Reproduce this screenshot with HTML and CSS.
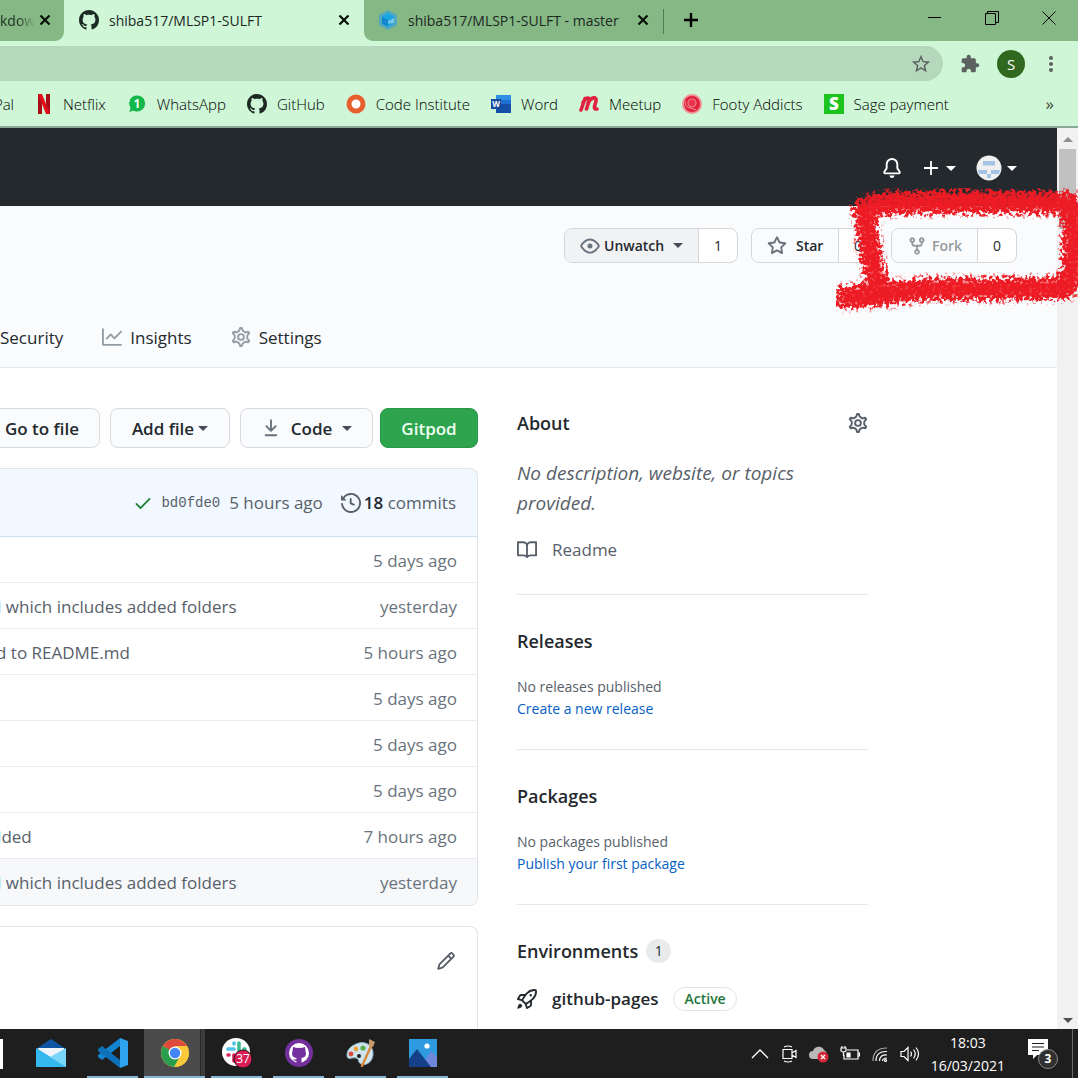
FILE: index.html
```html
<!DOCTYPE html>
<html lang="en">
<head>
<meta charset="utf-8">
<title>shiba517/MLSP1-SULFT</title>
<link rel="stylesheet" href="styles.css">
</head>
<body>
<svg class="defs" aria-hidden="true">
  <symbol id="i-github" viewBox="0 0 16 16"><path d="M8 0C3.58 0 0 3.58 0 8c0 3.54 2.29 6.53 5.47 7.59.4.07.55-.17.55-.38 0-.19-.01-.82-.01-1.49-2.01.37-2.53-.49-2.69-.94-.09-.23-.48-.94-.82-1.13-.28-.15-.68-.52-.01-.53.63-.01 1.08.58 1.23.82.72 1.21 1.87.87 2.33.66.07-.52.28-.87.51-1.07-1.78-.2-3.64-.89-3.64-3.95 0-.87.31-1.59.82-2.15-.08-.2-.36-1.02.08-2.12 0 0 .67-.21 2.2.82.64-.18 1.32-.27 2-.27.68 0 1.36.09 2 .27 1.53-1.04 2.2-.82 2.2-.82.44 1.1.16 1.92.08 2.12.51.56.82 1.27.82 2.15 0 3.07-1.87 3.75-3.65 3.95.29.25.54.73.54 1.48 0 1.07-.01 1.93-.01 2.2 0 .21.15.46.55.38A8.013 8.013 0 0016 8c0-4.42-3.58-8-8-8z"/></symbol>
  <symbol id="i-gear" viewBox="0.75 0.75 14.5 14.5"><g fill="none" stroke="currentColor" stroke-width="1.4"><circle cx="8" cy="8" r="2.1"/><path d="M7.429 1.525a6.593 6.593 0 011.142 0c.036.003.108.036.137.146l.289 1.105c.147.56.55.967.997 1.189.174.086.341.183.501.29.417.278.97.423 1.53.27l1.102-.303c.11-.03.175.016.195.046.219.31.41.641.573.989.014.031.022.11-.059.19l-.815.806c-.411.406-.562.957-.53 1.456a4.588 4.588 0 010 .582c-.032.499.119 1.05.53 1.456l.815.806c.08.08.073.159.059.19a6.494 6.494 0 01-.573.99c-.02.029-.086.074-.195.045l-1.103-.303c-.559-.153-1.112-.008-1.529.27-.16.107-.327.204-.5.29-.449.222-.851.628-.998 1.189l-.289 1.105c-.029.11-.101.143-.137.146a6.613 6.613 0 01-1.142 0c-.036-.003-.108-.037-.137-.146l-.289-1.105c-.147-.56-.55-.967-.997-1.189a4.502 4.502 0 01-.501-.29c-.417-.278-.97-.423-1.53-.27l-1.102.303c-.11.03-.175-.016-.195-.046a6.492 6.492 0 01-.573-.989c-.014-.031-.022-.11.059-.19l.815-.806c.411-.406.562-.957.53-1.456a4.587 4.587 0 010-.582c.032-.499-.119-1.05-.53-1.456l-.815-.806c-.08-.08-.073-.159-.059-.19a6.44 6.44 0 01.573-.99c.02-.029.086-.075.195-.045l1.103.303c.559.153 1.112.008 1.529-.27.16-.107.327-.204.5-.29.449-.222.851-.628.998-1.189l.289-1.105c.029-.11.101-.143.137-.146z"/></g></symbol>
  <symbol id="i-close" viewBox="0 0 12 12"><path d="M1.5 1.5l9 9M10.5 1.5l-9 9" stroke="currentColor" stroke-width="2.2" fill="none"/></symbol>
</svg>

<header class="browser">
  <div class="tabs">
    <div class="tab tab-first"><span class="tab-fade">kdow</span><button class="icon-btn tab-close" aria-label="Close tab"><svg width="12" height="12"><use href="#i-close"/></svg></button></div>
    <div class="tab tab-active"><svg class="tab-icon" width="20" height="20"><use href="#i-github"/></svg><span class="tab-title">shiba517/MLSP1-SULFT</span><button class="icon-btn tab-close" aria-label="Close tab"><svg width="12" height="12"><use href="#i-close"/></svg></button></div>
    <div class="tab tab-last">
      <svg class="tab-icon" width="20" height="20" viewBox="0 0 20 20"><path d="M10 0l9 5v10l-9 5-9-5V5z" fill="#51a9c0"/><path d="M10 3l6 3.500v7L10 17l-6-3.500v-7z" fill="#1aa6e4"/><path d="M4 6.500l6 3.500v7l-6-3.500z" fill="#1287cc"/><path d="M16 8l-6 3.500v2.500l3-1.500v1.500l3-1.500z" fill="#7cc6e6"/></svg>
      <span class="tab-title">shiba517/MLSP1-SULFT - master</span><button class="icon-btn tab-close" aria-label="Close tab"><svg width="12" height="12"><use href="#i-close"/></svg></button></div>
    <button class="icon-btn new-tab" aria-label="New tab"><svg width="16" height="16" viewBox="0 0 16 16"><path d="M8 1v14M1 8h14" stroke="currentColor" stroke-width="2.400"/></svg></button>
    <div class="window-controls">
      <button class="icon-btn" aria-label="Minimize"><svg width="14" height="14" viewBox="0 0 14 14"><path d="M0 6.500h13" stroke="currentColor"/></svg></button>
      <button class="icon-btn" aria-label="Restore"><svg width="14" height="14" viewBox="0 0 14 14" fill="none" stroke="currentColor"><path d="M.5 2.500h10v11H.5z"/><path d="M2.500 2.500v-2h11v11h-3"/></svg></button>
      <button class="icon-btn" aria-label="Close"><svg width="14" height="14" viewBox="0 0 14 14"><path d="M.5.5l13 13M13.500.5l-13 13" stroke="currentColor"/></svg></button>
    </div>
  </div>
  <div class="toolbar">
    <div class="omnibox"><input type="text" aria-label="Address"><button class="icon-btn" aria-label="Bookmark this page"><svg width="22" height="22" viewBox="0 0 24 24"><path fill="currentColor" d="M22 9.240l-7.190-.62L12 2 9.190 8.630 2 9.240l5.460 4.730L5.820 21 12 17.270 18.180 21l-1.630-7.030L22 9.240zM12 15.400l-3.760 2.270 1-4.280-3.320-2.880 4.380-.38L12 6.100l1.710 4.040 4.380.38-3.320 2.880 1 4.280L12 15.400z"/></svg></button></div>
    <button class="icon-btn extensions" aria-label="Extensions"><svg width="20" height="20" viewBox="0 0 24 24"><path fill="currentColor" d="M20.500 11H19V7c0-1.100-.9-2-2-2h-4V3.500C13 2.120 11.880 1 10.500 1S8 2.120 8 3.500V5H4c-1.100 0-1.990.9-1.990 2v3.800H3.500c1.490 0 2.700 1.210 2.700 2.700s-1.210 2.700-2.700 2.700H2V20c0 1.100.9 2 2 2h3.800v-1.500c0-1.490 1.210-2.700 2.700-2.700 1.490 0 2.700 1.210 2.700 2.700V22H17c1.100 0 2-.9 2-2v-4h1.500c1.380 0 2.500-1.120 2.500-2.500S21.880 11 20.500 11z"/></svg></button>
    <button class="profile">S</button>
    <button class="icon-btn" aria-label="Menu"><svg width="6" height="18" viewBox="0 0 6 18"><circle cx="3" cy="3" r="2"/><circle cx="3" cy="9" r="2"/><circle cx="3" cy="15" r="2"/></svg></button>
  </div>
  <nav class="bookmarks">
    <a class="bm-first" href="#">Pal</a>
    <a href="#"><svg width="18" height="20" viewBox="-1 0 18 20"><path d="M2 0h4v20H2zM10 0h4v20h-4z" fill="#a90d16"/><path d="M2 0h4l8 20h-4z" fill="#e3101b"/></svg><span>Netflix</span></a>
    <a href="#"><svg width="20" height="20" viewBox="-1 0 20 20"><path d="M9 1a8.500 8.500 0 11-4 16L.5 19 2 14A8.500 8.500 0 019 1z" fill="#12b84a" stroke="#e6fbea" stroke-width=".8"/><text x="9" y="14" text-anchor="middle" font-size="12" font-weight="700" fill="#eaffef">1</text></svg><span>WhatsApp</span></a>
    <a href="#"><svg width="20" height="20"><use href="#i-github"/></svg><span>GitHub</span></a>
    <a href="#"><svg width="20" height="20" viewBox="0 0 20 20"><circle cx="10" cy="10" r="7" fill="#fff" stroke="#e9602f" stroke-width="5"/></svg><span>Code Institute</span></a>
    <a href="#"><svg width="20" height="20" viewBox="0 0 20 20"><path fill="#2f8fe4" d="M5 1h15v5H5z"/><path fill="#1f6fd0" d="M5 6h15v4H5z"/><path fill="#164fa8" d="M5 10h15v9H5z"/><path fill="#174a9f" d="M0 5h10v10H0z"/><text x="5" y="13" text-anchor="middle" font-size="8" font-weight="700" fill="#fff">W</text></svg><span>Word</span></a>
    <a href="#"><svg width="20" height="20" viewBox="0 0 20 20"><path d="M2 16L6 4.500M4 9c2-5 7-7 6-2L7.500 15M9 9c3-6 9-7 8-2l-1.500 5.500q-.5 3 2.500 2.500" fill="none" stroke="#e0213f" stroke-width="3.600" stroke-linecap="round" stroke-linejoin="round"/></svg><span>Meetup</span></a>
    <a href="#"><svg width="20" height="20" viewBox="0 0 20 20"><circle cx="10" cy="10" r="9" fill="#e0213c" stroke="#f08f96" stroke-width="2"/><circle cx="10" cy="9" r="4" fill="#e8354b" stroke="#f2808c" stroke-width="1.200"/><path d="M3 7q0 7 6 7l5 2" fill="none" stroke="#f08f96"/></svg><span>Footy Addicts</span></a>
    <a href="#"><svg width="20" height="20" viewBox="0 0 20 20"><path fill="#1ec41e" d="M0 0h20v20H0z"/><text x="10" y="16" text-anchor="middle" font-size="17" font-weight="800" fill="#fff">S</text></svg><span>Sage payment</span></a>
    <button class="icon-btn more" aria-label="More bookmarks">»</button>
  </nav>
</header>

<div class="viewport">
  <div class="page">
    <div class="gh-header">
      <button class="icon-btn bell" aria-label="Notifications"><svg width="20" height="20" viewBox="0 0 16 16"><path d="M8 16a2 2 0 001.985-1.750c.017-.137-.097-.25-.235-.25h-3.500c-.138 0-.252.113-.235.25A2 2 0 008 16z"/><path fill-rule="evenodd" d="M8 1.500A3.500 3.500 0 004.500 5v2.947c0 .346-.102.683-.294.97l-1.703 2.556L2.518 11.500h10.964l.015-.027-1.703-2.556a1.750 1.750 0 01-.294-.97V5A3.500 3.500 0 008 1.500zM3 5a5 5 0 0110 0v2.947c0 .05.015.098.042.139l1.703 2.555A1.518 1.518 0 0113.482 13H2.518a1.518 1.518 0 01-1.263-2.360l1.703-2.554A.25.25 0 003 7.947V5z"/></svg></button>
      <button class="icon-btn create" aria-label="Create new"><svg width="14" height="14" viewBox="0 0 14 14"><path d="M7 0v14M0 7h14" stroke="currentColor" stroke-width="1.800"/></svg><span class="caret"></span></button>
      <button class="icon-btn account" aria-label="Account"><svg width="26" height="26" viewBox="0 0 26 26"><circle cx="13" cy="13" r="12.500" fill="#f0f0f0"/><path fill="#a5c3e6" d="M7 6h12v4.500H7zM2 15h9v4H3zM15 15h9l-1 4h-8zM11 19h4v4h-4z"/></svg><span class="caret"></span></button>
    </div>
    <div class="repo-head">
      <div class="repo-actions">
        <div class="split"><button class="split-main watching"><svg width="20" height="20" viewBox="0 0 16 16"><path fill="currentColor" fill-rule="evenodd" d="M1.679 7.932c.412-.621 1.242-1.750 2.366-2.717C5.175 4.242 6.527 3.500 8 3.500c1.473 0 2.824.742 3.955 1.715 1.124.967 1.954 2.096 2.366 2.717a.119.119 0 010 .136c-.412.621-1.242 1.750-2.366 2.717C10.825 11.758 9.473 12.500 8 12.500c-1.473 0-2.824-.742-3.955-1.715C2.920 9.818 2.090 8.690 1.679 8.068a.119.119 0 010-.136zM8 2c-1.981 0-3.670.992-4.933 2.078C1.797 5.169.88 6.423.43 7.100a1.619 1.619 0 000 1.798c.45.678 1.367 1.932 2.637 3.024C4.329 13.008 6.019 14 8 14c1.981 0 3.670-.992 4.933-2.078 1.270-1.091 2.187-2.345 2.637-3.023a1.619 1.619 0 000-1.798c-.45-.678-1.367-1.932-2.637-3.023C11.671 2.992 9.981 2 8 2zm0 8a2 2 0 100-4 2 2 0 000 4z"/></svg>Unwatch<span class="caret"></span></button><a class="count" href="#">1</a></div>
        <div class="split"><button class="split-main star"><svg width="20" height="20" viewBox="0 0 16 16"><path fill="currentColor" fill-rule="evenodd" d="M8 .25a.75.75 0 01.673.418l1.882 3.815 4.210.612a.75.75 0 01.416 1.279l-3.046 2.970.719 4.192a.75.75 0 01-1.088.791L8 12.347l-3.766 1.980a.75.75 0 01-1.088-.79l.72-4.194L.818 6.374a.75.75 0 01.416-1.280l4.210-.611L7.327.668A.75.75 0 018 .25zm0 2.445L6.615 5.500a.75.75 0 01-.564.41l-3.097.45 2.240 2.184a.75.75 0 01.216.664l-.528 3.084 2.769-1.456a.75.75 0 01.698 0l2.770 1.456-.53-3.084a.75.75 0 01.216-.664l2.240-2.183-3.096-.45a.75.75 0 01-.564-.41L8 2.694v.001z"/></svg>Star</button><a class="count" href="#">0</a></div>
        <div class="split"><button class="split-main fork" disabled><svg width="20" height="20" viewBox="0 0 16 16"><path fill="currentColor" fill-rule="evenodd" d="M5 3.250a.75.75 0 11-1.500 0 .75.75 0 011.500 0zm0 2.122a2.250 2.250 0 10-1.500 0v.878A2.250 2.250 0 005.750 8.500h1.500v2.128a2.251 2.251 0 101.500 0V8.500h1.500a2.250 2.250 0 002.250-2.250v-.878a2.250 2.250 0 10-1.500 0v.878a.75.75 0 01-.75.75h-4.500A.75.75 0 015 6.250v-.878zm3.750 7.378a.75.75 0 11-1.500 0 .75.75 0 011.500 0zm3-8.750a.75.75 0 100-1.500.75.75 0 000 1.500z"/></svg>Fork</button><a class="count" href="#">0</a></div>
      </div>
      <nav class="repo-nav">
        <a href="#">Security</a>
        <a href="#"><svg width="20" height="20" viewBox="0 0 16 16"><path fill="currentColor" d="M1.500 1.750a.75.75 0 00-1.500 0v12.500c0 .414.336.75.75.75h14.500a.75.75 0 000-1.500H1.500V1.750zm14.280 2.530a.75.75 0 00-1.060-1.060L10 7.940 7.530 5.470a.75.75 0 00-1.060 0L3.220 8.720a.75.75 0 001.060 1.060L7 7.060l2.470 2.470a.75.75 0 001.060 0l5.250-5.250z"/></svg>Insights</a>
        <a href="#"><svg width="20" height="20"><use href="#i-gear"/></svg>Settings</a>
      </nav>
    </div>
    <div class="repo-body">
      <main class="files">
        <div class="file-actions">
          <button class="btn goto">Go to file</button>
          <button class="btn add">Add file<span class="caret"></span></button>
          <button class="btn code"><svg width="20" height="20" viewBox="0 0 16 16"><path fill="currentColor" d="M7.470 10.780a.75.75 0 001.060 0l3.750-3.750a.75.75 0 00-1.060-1.060L8.750 8.440V1.750a.75.75 0 00-1.500 0v6.690L4.780 5.970a.75.75 0 00-1.060 1.060l3.750 3.750zM3.750 13a.75.75 0 000 1.500h8.500a.75.75 0 000-1.500h-8.500z"/></svg>Code<span class="caret"></span></button>
          <button class="btn gitpod">Gitpod</button>
        </div>
        <div class="box">
          <div class="commit-bar">
            <svg class="check" width="20" height="20" viewBox="0 0 16 16"><path fill="currentColor" d="M13.780 4.220a.75.75 0 010 1.060l-7.250 7.250a.75.75 0 01-1.060 0L2.220 9.280a.75.75 0 011.060-1.060L6 10.940l6.720-6.720a.75.75 0 011.060 0z"/></svg>
            <a class="sha" href="#">bd0fde0</a>
            <a class="when" href="#">5 hours ago</a>
            <a class="commits" href="#"><svg width="20" height="20" viewBox="0 0 16 16"><path fill="currentColor" d="M1.643 3.143L.427 1.927A.25.25 0 000 2.104V5.750c0 .138.112.25.25.25h3.646a.25.25 0 00.177-.427L2.715 4.215a6.500 6.500 0 11-1.180 4.458.75.75 0 10-1.493.154 8.001 8.001 0 101.600-5.684zM7.750 4a.75.75 0 01.75.75v2.992l2.028.812a.75.75 0 01-.557 1.392l-2.500-1A.75.75 0 017 8.250v-3.500A.75.75 0 017.750 4z"/></svg><span><strong>18</strong> commits</span></a>
          </div>
          <table class="file-table">
            <tr><td></td><td>5 days ago</td></tr>
            <tr><td><span class="cut">d which includes added folders</span></td><td>yesterday</td></tr>
            <tr><td><span class="cut-less">d to README.md</span></td><td>5 hours ago</td></tr>
            <tr><td></td><td>5 days ago</td></tr>
            <tr><td></td><td>5 days ago</td></tr>
            <tr><td></td><td>5 days ago</td></tr>
            <tr><td><span class="cut">dded</span></td><td>7 hours ago</td></tr>
            <tr class="hovered"><td><span class="cut">d which includes added folders</span></td><td>yesterday</td></tr>
          </table>
        </div>
        <div class="box readme"><button class="icon-btn" aria-label="Edit this file"><svg width="20" height="20" viewBox="0 0 16 16"><path fill="currentColor" fill-rule="evenodd" d="M11.013 1.427a1.750 1.750 0 012.474 0l1.086 1.086a1.750 1.750 0 010 2.474l-8.610 8.610c-.21.21-.47.364-.756.445l-3.251.93a.75.75 0 01-.927-.928l.929-3.250a1.750 1.750 0 01.445-.758l8.610-8.610zm1.414 1.060a.25.25 0 00-.354 0L10.811 3.750l1.439 1.440 1.263-1.263a.25.25 0 000-.354l-1.086-1.086zM11.189 6.250L9.750 4.810l-6.286 6.287a.25.25 0 00-.064.108l-.558 1.953 1.953-.558a.249.249 0 00.108-.064l6.286-6.286z"/></svg></button></div>
      </main>
      <aside class="sidebar">
        <section class="about">
          <div class="head-row"><h2>About</h2><button class="icon-btn" aria-label="Edit repository details"><svg width="20" height="20"><use href="#i-gear"/></svg></button></div>
          <p class="desc">No description, website, or topics provided.</p>
          <a class="side-link" href="#"><svg width="20" height="20" viewBox="0 0 16 16"><path fill="currentColor" fill-rule="evenodd" d="M0 1.750A.75.75 0 01.75 1h4.253c1.227 0 2.317.59 3 1.501A3.744 3.744 0 0111.006 1h4.245a.75.75 0 01.75.75v10.500a.75.75 0 01-.75.75h-4.507a2.250 2.250 0 00-1.591.659l-.622.621a.75.75 0 01-1.060 0l-.622-.621A2.250 2.250 0 005.258 13H.75a.75.75 0 01-.75-.75V1.750zm8.755 3a2.250 2.250 0 012.250-2.250H14.500v9h-3.757c-.71 0-1.400.201-1.992.572l.004-7.322zm-1.504 7.324l.004-5.073-.002-2.253A2.250 2.250 0 005.003 2.500H1.500v9h3.757a3.750 3.750 0 011.994.574z"/></svg>Readme</a>
        </section>
        <section><h2>Releases</h2><p>No releases published</p><a class="blue" href="#">Create a new release</a></section>
        <section><h2>Packages</h2><p>No packages published</p><a class="blue" href="#">Publish your first package</a></section>
        <section class="last"><h2>Environments<span class="counter">1</span></h2>
          <a class="side-link env" href="#"><svg width="20" height="20" viewBox="0 0 16 16"><path fill="currentColor" fill-rule="evenodd" d="M14.064 0a8.750 8.750 0 00-6.187 2.563l-.459.458c-.314.314-.616.641-.904.979H3.310a1.750 1.750 0 00-1.490.833L.11 7.607a.75.75 0 00.418 1.110l3.102.954c.037.051.079.1.124.145l2.429 2.428c.046.046.094.088.145.125l.954 3.102a.75.75 0 001.110.418l2.774-1.707a1.750 1.750 0 00.833-1.490V9.485c.338-.288.665-.59.979-.904l.458-.459A8.750 8.750 0 0016 1.936V1.750A1.750 1.750 0 0014.250 0h-.186zM10.500 10.625c-.088.06-.177.118-.266.175l-2.350 1.521.548 1.783 1.949-1.200a.25.25 0 00.119-.213v-2.066zM3.678 8.116L5.200 5.766c.058-.09.117-.178.176-.266H3.309a.25.25 0 00-.213.119l-1.200 1.950 1.782.547zm5.260-4.493A7.250 7.250 0 0114.063 1.500h.186a.25.25 0 01.25.25v.186a7.250 7.250 0 01-2.123 5.127l-.459.458a15.210 15.210 0 01-2.499 2.020l-2.317 1.500-2.143-2.143 1.500-2.317a15.250 15.250 0 012.020-2.500l.458-.458h.002zM12 5a1 1 0 11-2 0 1 1 0 012 0zm-8.440 9.560a1.500 1.500 0 10-2.120-2.120c-.734.73-1.047 2.332-1.150 3.003a.23.23 0 00.265.265c.671-.103 2.273-.416 3.005-1.148z"/></svg>github-pages<span class="status">Active</span></a>
        </section>
      </aside>
    </div>
  </div>
  <div class="scrollbar" aria-hidden="true"><span class="arrow-up"></span><span class="thumb"></span><span class="arrow-down"></span></div>
  <svg class="scribble" width="246" height="130" viewBox="0 0 246 130" aria-hidden="true">
    <filter id="crayon" filterUnits="userSpaceOnUse" x="0" y="0" width="246" height="130" color-interpolation-filters="sRGB">
      <feGaussianBlur in="SourceAlpha" stdDeviation="4" result="soft"/>
      <feTurbulence type="fractalNoise" baseFrequency="0.3" numOctaves="2" seed="4"/>
      <feColorMatrix type="matrix" values="0 0 0 0 0  0 0 0 0 0  0 0 0 0 0  3.5 0 0 0 -1.25" result="grain"/>
      <feComposite in="soft" in2="grain" operator="arithmetic" k2="1.3" k3="0.8" k4="-0.92"/>
      <feComponentTransfer result="mask"><feFuncA type="linear" slope="2.4"/></feComponentTransfer>
      <feFlood flood-color="#ed1c24"/>
      <feComposite in2="mask" operator="in"/>
    </filter>
    <g filter="url(#crayon)" fill="none" stroke="#000" stroke-linejoin="round">
      <path stroke-width="24" d="M24 26Q30 16 60 15l90-1 84 1 4 20-1 50-7 15-70 1-70 0-47 6L0 110"/>
      <path stroke-width="23" d="M28 22l6 40 10 46"/>
    </g>
  </svg>
</div>

<footer class="taskbar">
  <span class="search-edge"></span>
  <button class="task mail" aria-label="Mail"><svg width="30" height="28" viewBox="0 0 30 28"><path d="M0 10L15 0l15 10z" fill="#0d55a4"/><path d="M2 9h26v10H2z" fill="#eef5fb"/><path d="M0 9l16 10L30 9v19H0z" fill="#2aa6e0"/><path d="M0 9l30 19H0z" fill="#35b8ee"/><path d="M30 9L14 18l16 10z" fill="#7ad6f6"/></svg></button>
  <button class="task running" aria-label="Visual Studio Code"><svg width="30" height="30" viewBox="0 0 30 30"><path d="M22 8L4 22l-4-3v-2L22 0z" fill="#1283cf"/><path d="M22 22L4 8l-4 3v2l22 17z" fill="#0e70b8"/><path d="M22 0l8 3v24l-8 3z" fill="#2ea3ef"/></svg></button>
  <button class="task running current" aria-label="Chrome"><svg width="28" height="28" viewBox="0 0 28 28"><circle cx="14" cy="14" r="14" fill="#fbc93a"/><path d="M14 14L1.900 7A14 14 0 0126.100 7z" fill="#df4a3c"/><path d="M14 14L1.900 7A14 14 0 0013 28l6-11z" fill="#2a9d4e"/><path d="M14 7h12a14 14 0 01-12 21l6-11z" fill="#fbc93a"/><circle cx="14" cy="14" r="6.500" fill="#fff"/><circle cx="14" cy="14" r="5.200" fill="#4285f4"/></svg></button>
  <button class="task running" aria-label="Slack"><svg width="30" height="30" viewBox="0 0 30 30"><circle cx="14" cy="14" r="14" fill="#fff"/><g stroke-width="3.600" stroke-linecap="round"><path d="M6 11h6M12 5v1" stroke="#4dc3e8"/><path d="M17 5v7M22 11h1" stroke="#3eb991"/><path d="M16 17h6M16 21v1" stroke="#e8b23a"/><path d="M6 17h1M12 17v6" stroke="#d7235f"/></g><circle cx="21" cy="21" r="9" fill="#d81e54" stroke="#2a1118"/><text x="21" y="25" text-anchor="middle" font-size="12" fill="#fff">37</text></svg></button>
  <button class="task running" aria-label="GitHub Desktop"><svg width="28" height="28" viewBox="0 0 28 28"><circle cx="14" cy="14" r="14" fill="#74309c"/><circle cx="14" cy="14" r="10" fill="#fff"/><path fill="#74309c" d="M8 8l4 1q2-.5 4 0l4-1 .5 4q2 6-4 7v6h-5v-3q-3 0-4-2 2 1 4 0v-1q-6-1-4-7z"/></svg></button>
  <button class="task running" aria-label="Paint"><svg width="30" height="28" viewBox="0 0 30 28"><path d="M13 4C21 2 28 8 27 16s-8 11-12 9-1-5-5-6-9 3-9-3S6 6 13 4z" fill="#cfe4ee" stroke="#8fb4c6"/><circle cx="5" cy="15" r="2.400" fill="#d94b3a"/><circle cx="10" cy="10" r="2.400" fill="#e9a13a"/><circle cx="17" cy="9" r="2.600" fill="#59b04a"/><circle cx="13" cy="17" r="2" fill="#1e1e1e"/><path d="M26 5L16 27" stroke="#d98b3b" stroke-width="2.400" stroke-linecap="round"/><path d="M23 0l6 3-2 5-4-1z" fill="#c79b6b"/></svg></button>
  <button class="task running" aria-label="Photos"><svg width="28" height="28" viewBox="0 0 28 28"><path fill="#2e9be0" d="M0 0h28v28H0z"/><path fill="#7088dc" d="M12 28L22 12l6 6v10z"/><path fill="#153f86" d="M0 20L8 10l14 18H0z"/><circle cx="18" cy="7" r="2.600" fill="#fff"/></svg></button>
  <div class="tray">
    <button class="icon-btn" aria-label="Show hidden icons"><svg width="18" height="18" viewBox="0 0 18 18"><path d="M1 13l8-8 8 8" fill="none" stroke="currentColor" stroke-width="1.300"/></svg></button>
    <button class="icon-btn" aria-label="Meet now"><svg width="18" height="18" viewBox="0 0 18 18" fill="none" stroke="currentColor" stroke-width="1.200"><path d="M3 4.500h9v9H3zM12 8l4-2.500v7L12 10M4 2q4-2 8 0M4 16q4 2 8 0"/></svg></button>
    <button class="icon-btn" aria-label="OneDrive"><svg width="20" height="18" viewBox="0 0 20 18"><path d="M4 14a4 4 0 010-8 6 6 0 0111-1 5 5 0 010 9z" fill="#b9b9b9"/><circle cx="14" cy="12" r="5.500" fill="#d2293b"/><path d="M12 10l4 4M16 10l-4 4" stroke="#fff" stroke-width="1.300"/></svg></button>
    <button class="icon-btn" aria-label="Battery"><svg width="20" height="18" viewBox="0 0 20 18" fill="none" stroke="currentColor" stroke-width="1.200"><path d="M7 5h11v9H4v-4M18 8h1.500v3H18M1 3h5v3L4 7H3L1 6zM2 1v2M5 1v2M3.500 7v4"/><path d="M7 8h3v4H7z" fill="currentColor"/></svg></button>
    <button class="icon-btn" aria-label="Network"><svg width="18" height="18" viewBox="0 0 18 18" fill="none" stroke="currentColor" stroke-width="1.200"><path d="M2 16Q2 3 16 3" opacity=".6"/><path d="M5 16Q5 6 16 6.500M8.500 16q0-6.500 7.500-6M11.500 16q0-3 4.500-3"/><circle cx="14.500" cy="15.500" r="1"/></svg></button>
    <button class="icon-btn" aria-label="Volume"><svg width="20" height="18" viewBox="0 0 20 18" fill="none" stroke="currentColor" stroke-width="1.200"><path d="M1 6.500h3l4-4v13l-4-4H1zM10.500 6.500q2 2.500 0 5M13.500 4.500q3.500 4.500 0 9M16 2.500q5 6.500 0 13"/></svg></button>
    <div class="clock"><span>18:03</span><span>16/03/2021</span></div>
    <button class="icon-btn notices" aria-label="Notifications"><svg width="30" height="30" viewBox="0 0 30 30"><path d="M0 0h20v16H9l-4 4v-4H0z" fill="#fff"/><path d="M4 4.500h12M4 8h12M4 11.500h7" stroke="#1e1e1e" stroke-width="1.200"/><circle cx="20" cy="20" r="9.500" fill="#303030" stroke="#8a8a8a"/><text x="20" y="24" text-anchor="middle" font-size="12" font-weight="700" fill="#fff">3</text></svg></button>
    <span class="desktop-edge"></span>
  </div>
</footer>
</body>
</html>
```
FILE: styles.css
```css
* { box-sizing: border-box; }
body {
  margin: 0;
  height: 100vh;
  display: flex;
  flex-direction: column;
  overflow: hidden;
  font-family: "Open Sans", "Noto Sans", sans-serif;
  color: #24292e;
  background: #fff;
}
button, input { font: inherit; color: inherit; }
a { color: inherit; text-decoration: none; }
svg { flex: none; display: block; }
svg:not([fill]) { fill: currentColor; }
h2, p { margin: 0; }
.defs { display: none; }
.icon-btn { display: flex; align-items: center; padding: 0; border: 0; background: none; }
.caret { border: 5px solid transparent; border-top-color: currentColor; border-bottom: 0; }

/* Browser chrome */
.browser { flex: none; background: #cff6d7; border-bottom: 2px solid #89a895; color: #000; }
.tabs { display: flex; height: 41px; background: #cff6d7; font-size: 14px; }
.tab { display: flex; align-items: center; padding-bottom: 1px; background: #86b886; white-space: nowrap; }
.tab-first { width: 64px; border-bottom-right-radius: 9px; justify-content: space-between; padding-right: 13px; }
.tab-fade { color: transparent; background: linear-gradient(90deg, #1c2c1e 50%, #86b886); -webkit-background-clip: text; background-clip: text; }
.tab-active { width: 300px; background: none; padding: 0 14px 1px 15px; }
.tab-icon { margin-right: 10px; color: #1d2a24; }
.tab-close { margin-left: auto; color: #061008; }
.tab-last { width: 299px; padding: 0 14px 1px; border-bottom-left-radius: 9px; }
.tab-title { color: #1c281f; }
.new-tab { width: 56px; padding: 0 0 1px; justify-content: center; background: linear-gradient(#4f7a52, #4f7a52) 0 9px / 1px 25px no-repeat #86b886; color: #000; }
.window-controls { flex: 1; display: flex; justify-content: flex-end; gap: 43px; padding: 0 22px 6px 0; background: #86b886; }
.toolbar { display: flex; align-items: center; height: 45px; padding-right: 24px; color: #5b6260; }
.omnibox { flex: 1; display: flex; align-items: center; height: 35px; padding-right: 11px; border-radius: 0 18px 18px 0; background: #b5d8bc; }
.omnibox input { flex: 1; min-width: 0; border: 0; background: none; }
.extensions { margin: 0 17px; }
.profile { width: 28px; height: 28px; margin-right: 23px; padding: 0; border: 0; border-radius: 50%; background: #30681f; color: #fff; font-size: 15px; line-height: 28px; }
.bookmarks { display: flex; align-items: center; height: 40px; padding: 0 24px 5px 0; gap: 21px; font-size: 15px; font-weight: 300; white-space: nowrap; }
.bookmarks a { display: flex; align-items: center; gap: 10px; }
.bookmarks svg { color: #1d2a24; }
.bookmarks .bm-first { width: 14px; justify-content: flex-end; overflow: hidden; }
.more { margin-left: auto; font-size: 17px; font-weight: 400; color: #3d4a40; }

/* Page viewport */
.viewport { position: relative; flex: 1; min-height: 0; display: flex; overflow: hidden; }
.page { flex: 1; min-width: 0; display: flex; flex-direction: column; overflow: hidden; }
.scrollbar { width: 21px; display: flex; flex-direction: column; align-items: center; padding: 9px 0 6px; background: #f1f1f1; }
.arrow-up { border: 5px solid transparent; border-bottom-color: #8f8f8f; border-top: 0; }
.thumb { width: 17px; height: 80px; margin-top: 7px; background: #c1c1c1; }
.arrow-down { margin-top: auto; border: 5px solid transparent; border-top-color: #505050; border-bottom: 0; }
.scribble { position: absolute; top: 60px; right: -4px; pointer-events: none; }

.gh-header { flex: none; display: flex; align-items: center; justify-content: flex-end; gap: 20px; height: 78px; padding: 2px 40px 0 0; background: #24292e; color: #fff; }
.bell { margin-right: 2px; }
.create { gap: 8px; }
.account { gap: 5px; }

.repo-head { flex: none; background: #fafbfc; border-bottom: 1px solid #e4e7eb; }
.repo-actions { display: flex; justify-content: flex-end; gap: 13px; padding: 22px 40px 0 0; font-size: 14px; line-height: 20px; font-weight: 600; }
.split { display: flex; height: 35px; border: 1px solid #d4d6d9; border-radius: 8px; overflow: hidden; background: #fff; }
.split-main { display: flex; align-items: center; padding: 0 15px; border: 0; border-right: 1px solid #d4d6d9; background: #fafbfc; white-space: nowrap; }
.split-main svg { color: #6a737d; }
.split-main .caret { margin-left: 5px; color: #444d56; }
.watching { width: 134px; gap: 4px; background: #f1f2f4; }
.star { width: 87px; gap: 9px; }
.fork { width: 86px; gap: 5px; color: #949a9f; }
.fork svg { color: #949a9f; }
.count { width: 38px; text-align: center; line-height: 34px; font-weight: 500; }
.repo-nav { display: flex; align-items: center; gap: 39px; height: 60px; margin-top: 44px; font-size: 17px; }
.repo-nav a { display: flex; align-items: center; gap: 8px; }
.repo-nav svg { color: #959da5; }

.repo-body { flex: 1; display: grid; grid-template-columns: minmax(0, 1fr) 351px; gap: 39px; padding: 40px 189px 0 0; min-height: 0; }
.files { display: flex; flex-direction: column; min-width: 0; }
.file-actions { display: flex; justify-content: flex-end; font-size: 17px; font-weight: 600; }
.btn { flex: none; display: flex; align-items: center; justify-content: center; height: 40px; padding: 0; border: 1px solid #d8dadd; border-radius: 8px; background: #fafbfc; white-space: nowrap; }
.btn .caret { color: #444d56; }
.goto { width: 116px; margin-right: 10px; }
.add { width: 120px; margin-right: 10px; gap: 4px; }
.code { width: 133px; margin-right: 7px; gap: 10px; }
.code svg { color: #6a737d; }
.gitpod { width: 98px; background: #2ea44f; border-color: #2a964a; color: #effff2; }
.box { border: 1px solid #e1e4e8; border-left: 0; border-radius: 0 8px 8px 0; overflow: hidden; }
.commit-bar { display: flex; align-items: center; justify-content: flex-end; height: 69px; margin: -1px -1px 0 0; padding-right: 21px; background: #f1f8ff; border: 1px solid #cfe0ec; border-left: 0; border-radius: 0 8px 0 0; font-size: 17px; color: #586069; }
.file-actions + .box { margin: 20px 0; flex: none; }
.check { color: #22863a; margin-right: 8px; }
.sha { font: 14px "Liberation Mono", monospace; margin-right: 9px; }
.when { margin-right: 18px; }
.commits { display: flex; align-items: center; gap: 3px; }
.commits strong { color: #24292e; font-weight: 600; }
.file-table { width: 100%; border-collapse: separate; border-spacing: 0; font-size: 17px; line-height: 24px; color: #586069; }
.file-table td { height: 46px; padding: 2px 0 0; border-bottom: 1px solid #eaecef; white-space: nowrap; }
.file-table td:last-child { padding-right: 20px; text-align: right; color: #6a737d; }
.file-table tr:last-child td { border-bottom: 0; }
.cut { margin-left: -9px; }
.cut-less { margin-left: -4px; }
.hovered { background: #f6f8fa; }
.readme { flex: 1; display: flex; align-items: flex-start; justify-content: flex-end; border-bottom: 0; border-bottom-right-radius: 0; padding: 24px 21px; color: #586069; }

.sidebar section { padding: 31px 0 29px; border-bottom: 1px solid #e6e8eb; font-size: 14px; line-height: 22px; color: #586069; }
.sidebar .about { padding-top: 0; }
.sidebar .last { border-bottom: 0; }
h2 { display: flex; align-items: center; font-size: 18px; line-height: 30px; font-weight: 600; color: #24292e; }
.sidebar section > h2, .head-row { margin-bottom: 20px; }
.sidebar .last > h2 { margin-bottom: 18px; }
.head-row { display: flex; justify-content: space-between; }
.desc { font-size: 19px; line-height: 30px; font-style: italic; margin-bottom: 17px; }
.side-link { display: flex; align-items: center; gap: 15px; font-size: 17px; line-height: 30px; }
.blue { color: #0560c5; }
.counter { min-width: 25px; height: 24px; margin-left: 8px; border-radius: 12px; background: #e9eaec; text-align: center; font-size: 14px; line-height: 24px; font-weight: 400; }
.env { color: #24292e; font-weight: 600; }
.status { padding: 0 10px; border: 1px solid #e1e4e8; border-radius: 12px; font-size: 14px; line-height: 22px; color: #22763a; }

/* Taskbar */
.taskbar { flex: none; display: flex; height: 49px; background: #1e1e1e; color: #fff; }
.search-edge { width: 3px; height: 30px; margin: 10px 22px 0 0; background: #fff; }
.task { width: 51px; margin-right: 11px; padding: 0; display: flex; align-items: center; justify-content: center; border: 0; border-bottom: 2px solid transparent; background: none; }
.running { border-bottom-color: #84b4d8; }
.current { width: 61px; margin-left: -5px; margin-right: 6px; background: linear-gradient(90deg, #4b4b4b 56px, #2a2a2a 56px, #2a2a2a 57px, #3c3c3c 57px); }
.tray { flex: 1; display: flex; align-items: center; justify-content: flex-end; gap: 11px; }
.clock { display: flex; flex-direction: column; align-items: center; font-size: 14px; line-height: 23px; }
.notices { margin-left: 12px; }
.desktop-edge { width: 6px; height: 49px; border-left: 1px solid #6a6a6a; margin-left: 3px; }
```
